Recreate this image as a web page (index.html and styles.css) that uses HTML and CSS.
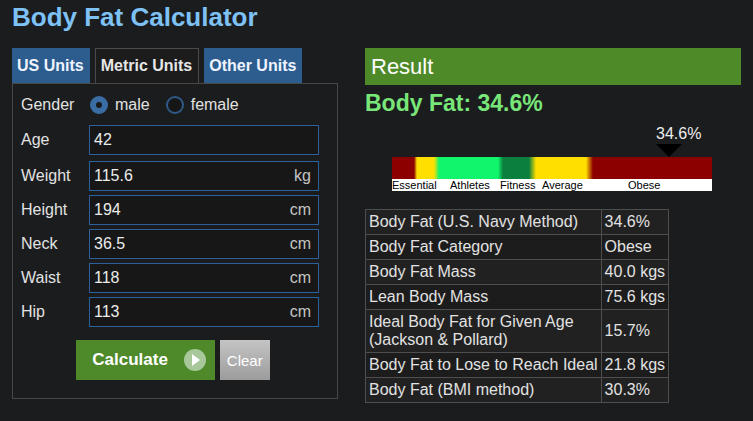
FILE: index.html
```html
<!DOCTYPE html>
<html lang="en">
<head>
    <meta charset="UTF-8">
    <meta name="viewport" content="width=device-width, initial-scale=1.0">
    <title>Body Fat Calculator</title>
    <link rel="stylesheet" href="styles.css">
</head>
<body>

<h1 class="title">Body Fat Calculator</h1>

<div class="main">
    <div class="calc">
        <div class="tabs">
            <div class="tab">US Units</div>
            <div class="tab active">Metric Units</div>
            <div class="tab">Other Units</div>
        </div>
        <div class="panel">
            <div class="row gender-row">
                <span class="label">Gender</span>
                <div class="radios">
                    <span class="radio checked"></span><span class="radio-text">male</span>
                    <span class="radio"></span><span class="radio-text">female</span>
                </div>
            </div>
            <div class="row age-row">
                <span class="label">Age</span>
                <div class="field"><input type="text" value="42"></div>
            </div>
            <div class="row">
                <span class="label">Weight</span>
                <div class="field"><input type="text" value="115.6"><span class="unit">kg</span></div>
            </div>
            <div class="row">
                <span class="label">Height</span>
                <div class="field"><input type="text" value="194"><span class="unit">cm</span></div>
            </div>
            <div class="row">
                <span class="label">Neck</span>
                <div class="field"><input type="text" value="36.5"><span class="unit">cm</span></div>
            </div>
            <div class="row">
                <span class="label">Waist</span>
                <div class="field"><input type="text" value="118"><span class="unit">cm</span></div>
            </div>
            <div class="row">
                <span class="label">Hip</span>
                <div class="field"><input type="text" value="113"><span class="unit">cm</span></div>
            </div>
            <div class="buttons">
                <button class="btn-calc">Calculate
                    <svg width="22" height="22" viewBox="0 0 22 22">
                        <circle cx="11" cy="11" r="11" fill="#a8c79a"/>
                        <polygon points="8,5 16,11 8,17" fill="#ffffff"/>
                    </svg>
                </button>
                <button class="btn-clear">Clear</button>
            </div>
        </div>
    </div>

    <div class="result">
        <div class="result-head">Result</div>
        <div class="result-big">Body Fat: 34.6%</div>
        <div class="chart">
            <div class="marker" style="left: 264px;">
                <span class="marker-text">34.6%</span>
                <span class="marker-arrow"></span>
            </div>
            <div class="bar"></div>
            <div class="bar-labels">
                <span style="width: 58px;">Essential</span>
                <span style="width: 50px;">Athletes</span>
                <span style="width: 42px;">Fitness</span>
                <span style="width: 86px;">Average</span>
                <span>Obese</span>
            </div>
        </div>
        <table class="result-table">
            <tr><td>Body Fat (U.S. Navy Method)</td><td>34.6%</td></tr>
            <tr><td>Body Fat Category</td><td>Obese</td></tr>
            <tr><td>Body Fat Mass</td><td>40.0 kgs</td></tr>
            <tr><td>Lean Body Mass</td><td>75.6 kgs</td></tr>
            <tr><td>Ideal Body Fat for Given Age<br>(Jackson &amp; Pollard)</td><td>15.7%</td></tr>
            <tr><td>Body Fat to Lose to Reach Ideal</td><td>21.8 kgs</td></tr>
            <tr><td>Body Fat (BMI method)</td><td>30.3%</td></tr>
        </table>
    </div>
</div>

</body>
</html>
```

FILE: styles.css
```css
body {
    font-family: "Liberation Sans", Arial, sans-serif;
    background-color: #1b1c1e;
    color: #e2e2e2;
    margin: 0;
    padding: 0 12px;
}
.title {
    font-size: 26px;
    line-height: 30px;
    font-weight: bold;
    color: #7ec1f4;
    margin: 2px 0 16px 0;
}
.main {
    display: flex;
    gap: 27px;
    align-items: flex-start;
}
.calc {
    width: 326px;
}
.tabs {
    display: flex;
    gap: 5px;
    height: 35px;
}
.tab {
    display: flex;
    align-items: center;
    padding: 0 6px 0 5px;
    background: #2c5d8e;
    color: #eef4ff;
    font-size: 16px;
    font-weight: bold;
}
.tab.active {
    background: #1c1c1c;
    color: #e6e6e6;
    border: 1px solid #4a4a4a;
    border-bottom: none;
}
.panel {
    border: 1px solid #474747;
    padding: 5px 18px 18px 8px;
    display: flex;
    flex-direction: column;
    gap: 4px;
}
.row {
    display: flex;
    align-items: center;
    height: 30px;
}
.gender-row {
    height: 32px;
}
.age-row {
    margin-bottom: 2px;
}
.label {
    width: 68px;
    flex-shrink: 0;
    font-size: 16px;
    color: #e2e2e2;
}
.radios {
    display: flex;
    align-items: center;
    margin-left: 1px;
}
.radio {
    width: 18px;
    height: 18px;
    box-sizing: border-box;
    border-radius: 50%;
    border: 2px solid #2e5a88;
    background: #161616;
}
.radio.checked {
    border: 6px solid #3a6da3;
    background: #1a1a1a;
}
.radio-text {
    font-size: 16px;
    margin: 0 16px 0 7px;
}
.field {
    flex: 1;
    min-width: 0;
    height: 30px;
    box-sizing: border-box;
    border: 1px solid #2d5f9c;
    background: #171717;
    display: flex;
    align-items: center;
}
.field input {
    flex: 1;
    min-width: 0;
    width: 0;
    background: transparent;
    border: none;
    outline: none;
    color: #ececec;
    font-family: "Liberation Sans", Arial, sans-serif;
    font-size: 16px;
    padding: 0 0 0 4px;
}
.unit {
    font-size: 16px;
    color: #c4c4c4;
    padding-right: 7px;
}
.buttons {
    display: flex;
    justify-content: center;
    gap: 5px;
    margin-top: 9px;
    margin-right: -6px;
}
.buttons button {
    height: 40px;
    border: none;
    color: #fff;
    font-family: "Liberation Sans", Arial, sans-serif;
    cursor: pointer;
}
.btn-calc {
    display: flex;
    align-items: center;
    gap: 16px;
    background: #4e8a2a;
    font-size: 17px;
    font-weight: bold;
    padding: 0 9px 0 16px;
}
.btn-clear {
    background: linear-gradient(#c4c4c4, #9c9c9c);
    font-size: 15px;
    padding: 0 7px;
}
.result {
    width: 376px;
}
.result-head {
    height: 37px;
    background: #4f8a29;
    color: #fff;
    font-size: 22px;
    line-height: 37px;
    padding-left: 6px;
}
.result-big {
    font-size: 23px;
    line-height: 27px;
    font-weight: bold;
    color: #79e67a;
    margin-top: 5px;
}
.chart {
    position: relative;
    width: 320px;
    margin-left: 27px;
    padding-top: 40px;
}
.marker {
    position: absolute;
    top: 9px;
    display: flex;
    flex-direction: column;
}
.marker-text {
    font-size: 16px;
    line-height: 16px;
    color: #eeeeee;
}
.marker-arrow {
    width: 0;
    height: 0;
    margin-top: 2px;
    border-left: 13px solid transparent;
    border-right: 13px solid transparent;
    border-top: 13px solid #000;
}
.bar {
    height: 22px;
    background: linear-gradient(to right,
        #8c0000 0, #8c0000 22px,
        #ffdf00 25px, #ffdf00 42px,
        #10f56c 47px, #10f56c 106px,
        #0b7f3d 111px, #0b7f3d 137px,
        #ffdf00 144px, #ffdf00 194px,
        #8c0000 201px, #8c0000 100%);
}
.bar-labels {
    display: flex;
    height: 12px;
    background: #fff;
    color: #000;
    font-size: 11px;
    line-height: 12px;
}
.result-table {
    margin-top: 18px;
    border-collapse: collapse;
    font-size: 16px;
    line-height: 18px;
    color: #e2e2e2;
}
.result-table td {
    border: 1px solid #4e4e4e;
    padding: 3px 3px;
    white-space: nowrap;
    background: #1c1c1c;
}
.result-table tr:nth-child(odd) td {
    background: #212121;
}
```
